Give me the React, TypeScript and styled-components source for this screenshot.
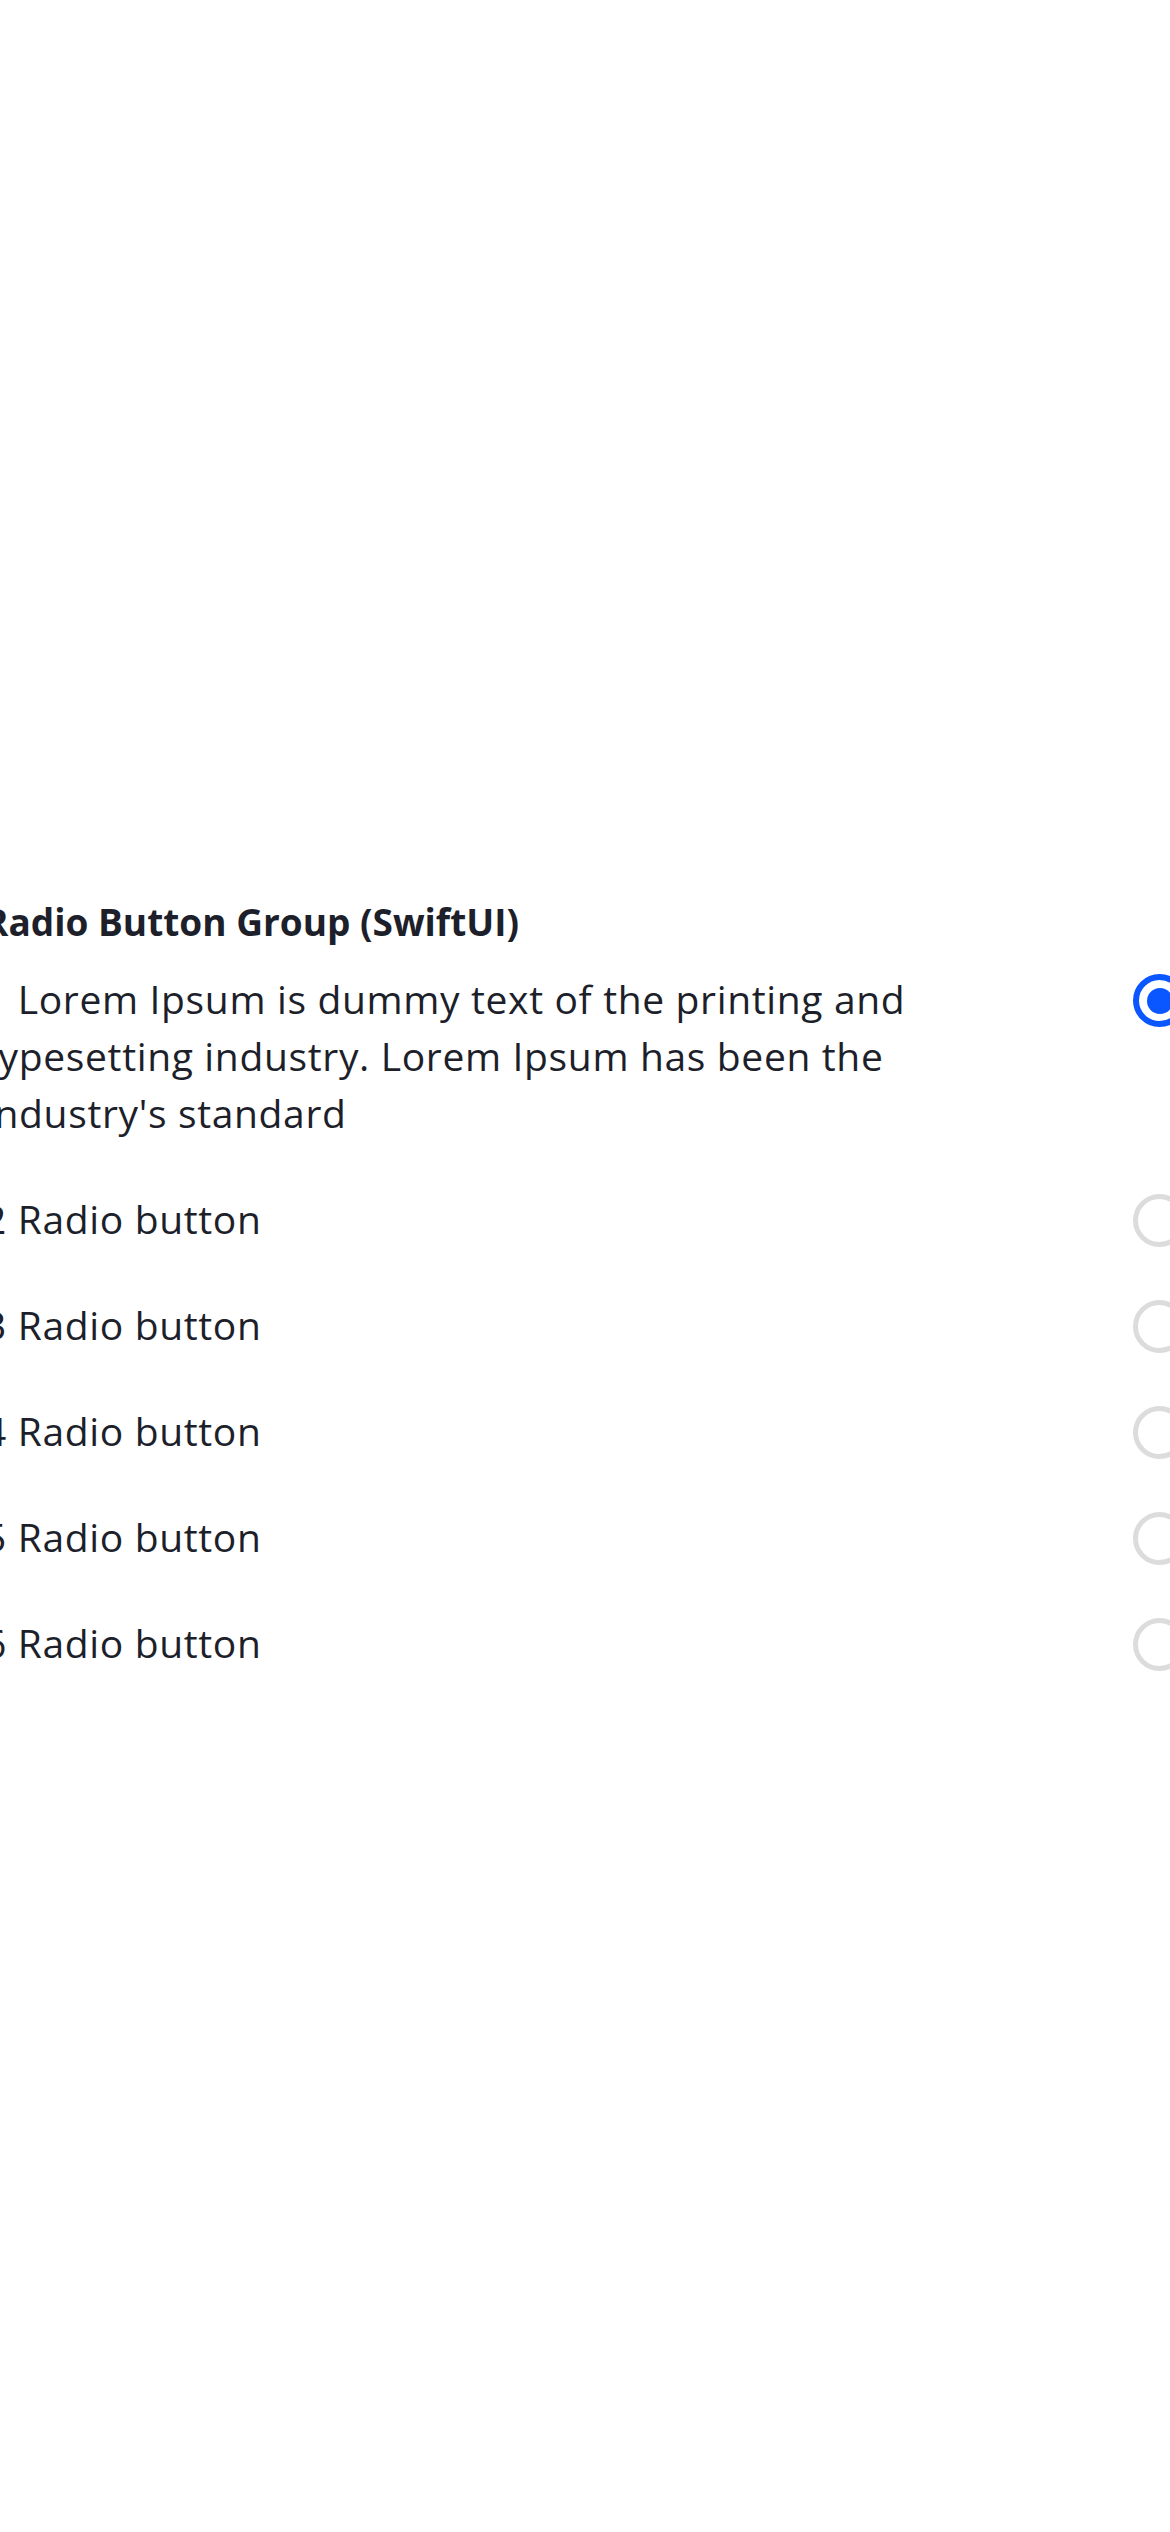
import React from "react";
import styled, { createGlobalStyle } from "styled-components";

const Global = createGlobalStyle`
  html, body {
    margin: 0;
    padding: 0;
    background: #ffffff;
    overflow-x: hidden;
  }
  body {
    font-family: "Open Sans", "Noto Sans", sans-serif;
    color: #1d1f2b;
  }
`;

const Page = styled.div`
  width: 1202px;
  margin-left: -16px;
  padding-top: 896px;
  box-sizing: border-box;
`;

const Title = styled.h2`
  margin: 0;
  font-size: 37px;
  line-height: 52px;
  font-weight: 700;
  color: #1d1f2b;
`;

const Group = styled.div`
  display: flex;
  flex-direction: column;
`;

const Row = styled.label`
  display: flex;
  align-items: flex-start;
  justify-content: space-between;
  padding: 22px 0 27px;
  gap: 24px;
`;

const Label = styled.span`
  font-size: 39px;
  line-height: 57px;
  letter-spacing: 0.65px;
  max-width: 960px;
  color: #1d1f2b;
`;

const Radio = styled.span<{ $checked: boolean }>`
  flex: none;
  width: 53px;
  height: 53px;
  margin-top: 4px;
  box-sizing: border-box;
  border-radius: 50%;
  border: ${(p) => (p.$checked ? "6px solid #0a56ff" : "5px solid #dcdcdc")};
  display: flex;
  align-items: center;
  justify-content: center;
  &::after {
    content: "";
    width: 26px;
    height: 26px;
    border-radius: 50%;
    background: #0a56ff;
    display: ${(p) => (p.$checked ? "block" : "none")};
  }
`;

const items = [
  "1 Lorem Ipsum is dummy text of the printing and typesetting industry. Lorem Ipsum has been the industry's standard",
  "2 Radio button",
  "3 Radio button",
  "4 Radio button",
  "5 Radio button",
  "6 Radio button",
];

export default function App() {
  return (
    <>
      <Global />
      <Page>
        <Title>Radio Button Group (SwiftUI)</Title>
        <Group role="radiogroup">
          {items.map((t, i) => (
            <Row key={i}>
              <Label>{t}</Label>
              <Radio $checked={i === 0} role="radio" aria-checked={i === 0} />
            </Row>
          ))}
        </Group>
      </Page>
    </>
  );
}
